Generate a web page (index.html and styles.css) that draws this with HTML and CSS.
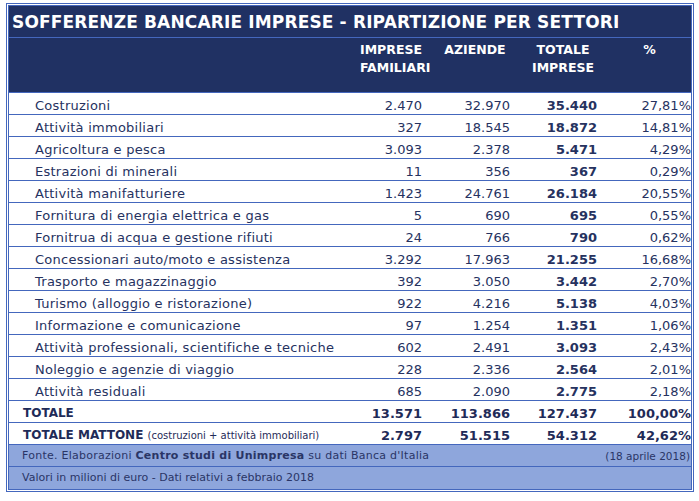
FILE: index.html
```html
<!DOCTYPE html>
<html lang="it">
<head>
<meta charset="utf-8">
<title>Sofferenze bancarie imprese</title>
<link rel="stylesheet" href="styles.css">
</head>
<body>
<div class="sheet">
  <div class="title">SOFFERENZE BANCARIE IMPRESE - RIPARTIZIONE PER SETTORI</div>
  <div class="row head">
    <div class="lab"></div>
    <div class="h h1">IMPRESE<br>FAMILIARI</div>
    <div class="h h2">AZIENDE</div>
    <div class="h h3">TOTALE<br>IMPRESE</div>
    <div class="h h4">%</div>
  </div>
  <div class="row"><div class="lab">Costruzioni</div><div class="n">2.470</div><div class="n">32.970</div><div class="n b">35.440</div><div class="n p">27,81%</div></div>
  <div class="row"><div class="lab">Attività immobiliari</div><div class="n">327</div><div class="n">18.545</div><div class="n b">18.872</div><div class="n p">14,81%</div></div>
  <div class="row"><div class="lab">Agricoltura e pesca</div><div class="n">3.093</div><div class="n">2.378</div><div class="n b">5.471</div><div class="n p">4,29%</div></div>
  <div class="row"><div class="lab">Estrazioni di minerali</div><div class="n">11</div><div class="n">356</div><div class="n b">367</div><div class="n p">0,29%</div></div>
  <div class="row"><div class="lab">Attività manifatturiere</div><div class="n">1.423</div><div class="n">24.761</div><div class="n b">26.184</div><div class="n p">20,55%</div></div>
  <div class="row"><div class="lab">Fornitura di energia elettrica e gas</div><div class="n">5</div><div class="n">690</div><div class="n b">695</div><div class="n p">0,55%</div></div>
  <div class="row"><div class="lab">Fornitrua di acqua e gestione rifiuti</div><div class="n">24</div><div class="n">766</div><div class="n b">790</div><div class="n p">0,62%</div></div>
  <div class="row"><div class="lab">Concessionari auto/moto e assistenza</div><div class="n">3.292</div><div class="n">17.963</div><div class="n b">21.255</div><div class="n p">16,68%</div></div>
  <div class="row"><div class="lab">Trasporto e magazzinaggio</div><div class="n">392</div><div class="n">3.050</div><div class="n b">3.442</div><div class="n p">2,70%</div></div>
  <div class="row"><div class="lab">Turismo (alloggio e ristorazione)</div><div class="n">922</div><div class="n">4.216</div><div class="n b">5.138</div><div class="n p">4,03%</div></div>
  <div class="row"><div class="lab">Informazione e comunicazione</div><div class="n">97</div><div class="n">1.254</div><div class="n b">1.351</div><div class="n p">1,06%</div></div>
  <div class="row"><div class="lab">Attività professionali, scientifiche e tecniche</div><div class="n">602</div><div class="n">2.491</div><div class="n b">3.093</div><div class="n p">2,43%</div></div>
  <div class="row"><div class="lab">Noleggio e agenzie di viaggio</div><div class="n">228</div><div class="n">2.336</div><div class="n b">2.564</div><div class="n p">2,01%</div></div>
  <div class="row"><div class="lab">Attività residuali</div><div class="n">685</div><div class="n">2.090</div><div class="n b">2.775</div><div class="n p">2,18%</div></div>
  <div class="row tot"><div class="lab">TOTALE</div><div class="n">13.571</div><div class="n">113.866</div><div class="n">127.437</div><div class="n p">100,00%</div></div>
  <div class="row tot"><div class="lab">TOTALE MATTONE <span class="note">(costruzioni + attività immobiliari)</span></div><div class="n">2.797</div><div class="n">51.515</div><div class="n">54.312</div><div class="n p">42,62%</div></div>
  <div class="foot"><span class="src">Fonte. Elaborazioni <b>Centro studi di Unimpresa</b> su dati Banca d'Italia</span><span class="date">(18 aprile 2018)</span></div>
  <div class="foot">Valori in milioni di euro - Dati relativi a febbraio 2018</div>
</div>
</body>
</html>
```

FILE: styles.css
```css
html, body {
  margin: 0;
  padding: 0;
  background: #ffffff;
}
body {
  font-family: "DejaVu Sans", sans-serif;
  color: #26325f;
}
.sheet {
  margin: 3px 0 0 6px;
  width: 682px;
  border: 3px double #4467bd;
}
.title {
  box-sizing: border-box;
  height: 32px;
  background: #203163;
  color: #ffffff;
  font-weight: bold;
  font-size: 17px;
  letter-spacing: 0.15px;
  line-height: 28px;
  padding: 2px 0 0 3px;
  border-bottom: 1px solid #4467bd;
  white-space: nowrap;
  overflow: hidden;
}
.row {
  display: grid;
  grid-template-columns: 351px 64px 88px 87px 92px;
  box-sizing: border-box;
  height: 22px;
  padding-top: 4px;
  border-bottom: 1px solid #4467bd;
  font-size: 13px;
  line-height: 17px;
}
.row.head {
  height: 55px;
  padding-top: 3px;
  background: #203163;
  color: #ffffff;
  font-weight: bold;
  font-size: 12.5px;
  line-height: 18px;
}
.h { text-align: center; }
.h1 { padding-right: 10px; }
.h2 { padding-left: 14px; }
.h3 { padding-left: 15px; }
.h4 { padding-left: 9px; }
.lab {
  padding-left: 26px;
  white-space: nowrap;
  letter-spacing: 0.25px;
}
.n {
  text-align: right;
  padding-right: 2px;
}
.n.p { padding-right: 0; }
.b { font-weight: bold; }
.row.tot {
  font-weight: bold;
  font-size: 13px;
  color: #1f2b58;
}
.row.tot .lab {
  padding-left: 14px;
  font-size: 12px;
  letter-spacing: 0;
}
.note {
  font-weight: normal;
  font-size: 10px;
}
.foot {
  display: flex;
  justify-content: space-between;
  box-sizing: border-box;
  height: 22px;
  line-height: 20px;
  padding: 1px 1px 0 13px;
  background: #8ea6dc;
  border-bottom: 1px solid #4467bd;
  font-size: 11px;
  color: #2a3566;
}
.foot:last-child { border-bottom: none; }
.src { letter-spacing: 0.25px; }
.date { font-size: 10.5px; }
```
